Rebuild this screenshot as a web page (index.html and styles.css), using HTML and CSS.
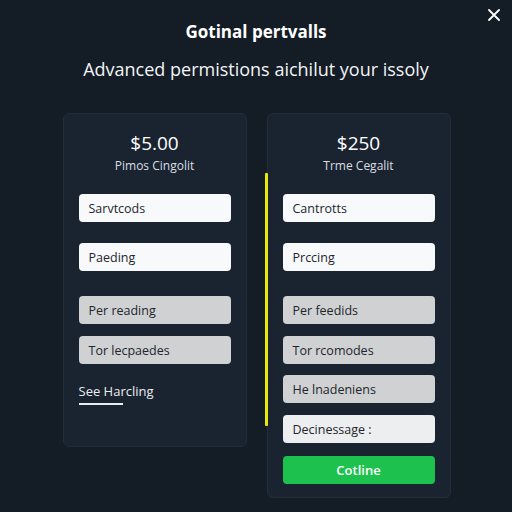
FILE: index.html
```html
<!DOCTYPE html>
<html lang="en">
<head>
    <meta charset="UTF-8">
    <meta name="viewport" content="width=device-width, initial-scale=1.0">
    <title>Gotinal pertvalls</title>
    <link rel="stylesheet" href="styles.css">
</head>
<body>
    <button class="close" aria-label="Close">
        <svg width="12" height="12" viewBox="0 0 12 12">
            <path d="M1 1L11 11M11 1L1 11" stroke="#fff" stroke-width="1.8" stroke-linecap="round"/>
        </svg>
    </button>

    <header class="head">
        <h1>Gotinal pertvalls</h1>
        <p class="lead">Advanced permistions aichilut your issoly</p>
    </header>

    <div class="plans">
        <div class="card card-short">
            <div class="price">$5.00</div>
            <div class="plan-name">Pimos Cingolit</div>
            <div class="list">
                <div class="item">Sarvtcods</div>
                <div class="item wide">Paeding</div>
                <div class="item muted wider">Per reading</div>
                <div class="item muted">Tor lecpaedes</div>
            </div>
            <a class="more" href="#">See Harcling</a>
        </div>

        <div class="card">
            <span class="marker"></span>
            <div class="price">$250</div>
            <div class="plan-name">Trme Cegalit</div>
            <div class="list">
                <div class="item">Cantrotts</div>
                <div class="item wide">Prccing</div>
                <div class="item muted wider">Per feedids</div>
                <div class="item muted">Tor rcomodes</div>
                <div class="item muted tight">He lnadeniens</div>
                <div class="item soft">Decinessage :</div>
                <button class="item go">Cotline</button>
            </div>
        </div>
    </div>
</body>
</html>
```

FILE: styles.css
```css
body {
    font-family: "Open Sans", "Noto Sans", sans-serif;
    margin: 0;
    background-color: #141c26;
    color: #fff;
    min-height: 512px;
}
.close {
    position: absolute;
    top: 8px;
    right: 11px;
    background: none;
    border: 0;
    padding: 0;
    width: 14px;
    height: 14px;
    display: flex;
    align-items: center;
    justify-content: center;
}
.head {
    text-align: center;
    padding-top: 20px;
}
h1 {
    margin: 0;
    font-size: 17px;
    font-weight: 700;
    line-height: 24px;
}
.lead {
    margin: 12px 0 0;
    font-size: 18px;
    line-height: 26px;
    color: #f2f4f6;
}
.plans {
    display: flex;
    justify-content: center;
    align-items: flex-start;
    gap: 20px;
    margin-top: 31px;
    padding-left: 1px;
}
.card {
    position: relative;
    width: 184px;
    box-sizing: border-box;
    padding: 16px 15px 13px;
    background-color: #1a2430;
    border: 1px solid #222d3a;
    border-radius: 6px;
}
.card-short {
    height: 334px;
}
.marker {
    position: absolute;
    left: -3px;
    top: 59px;
    width: 3px;
    height: 253px;
    background-color: #e6ea0a;
    border-radius: 1px;
}
.price {
    text-align: center;
    font-size: 19px;
    line-height: 26px;
}
.plan-name {
    text-align: center;
    font-size: 12px;
    line-height: 16px;
    color: #d9dee4;
    margin-top: 2px;
}
.list {
    display: flex;
    flex-direction: column;
    gap: 12px;
    margin-top: 20px;
}
.item {
    height: 28px;
    box-sizing: border-box;
    padding: 0 10px;
    display: flex;
    align-items: center;
    background-color: #f8f9fa;
    border-radius: 4px;
    color: #1e252d;
    font-size: 12.5px;
}
.wide {
    margin-top: 9px;
}
.wider {
    margin-top: 13px;
}
.tight {
    margin-top: -1px;
}
.muted {
    background-color: #cfd1d3;
}
.soft {
    background-color: #eceeef;
}
.go {
    margin-top: 1px;
    border: 0;
    justify-content: center;
    background-color: #1dc24e;
    color: #fff;
    font-family: inherit;
    font-weight: 600;
    font-size: 13px;
}
.more {
    position: relative;
    display: inline-block;
    margin-top: 18px;
    color: #e9edf1;
    font-size: 13px;
    text-decoration: none;
}
.more::after {
    content: "";
    position: absolute;
    left: 0;
    bottom: -5px;
    width: 44px;
    height: 2px;
    background-color: #e9edf1;
}
```
